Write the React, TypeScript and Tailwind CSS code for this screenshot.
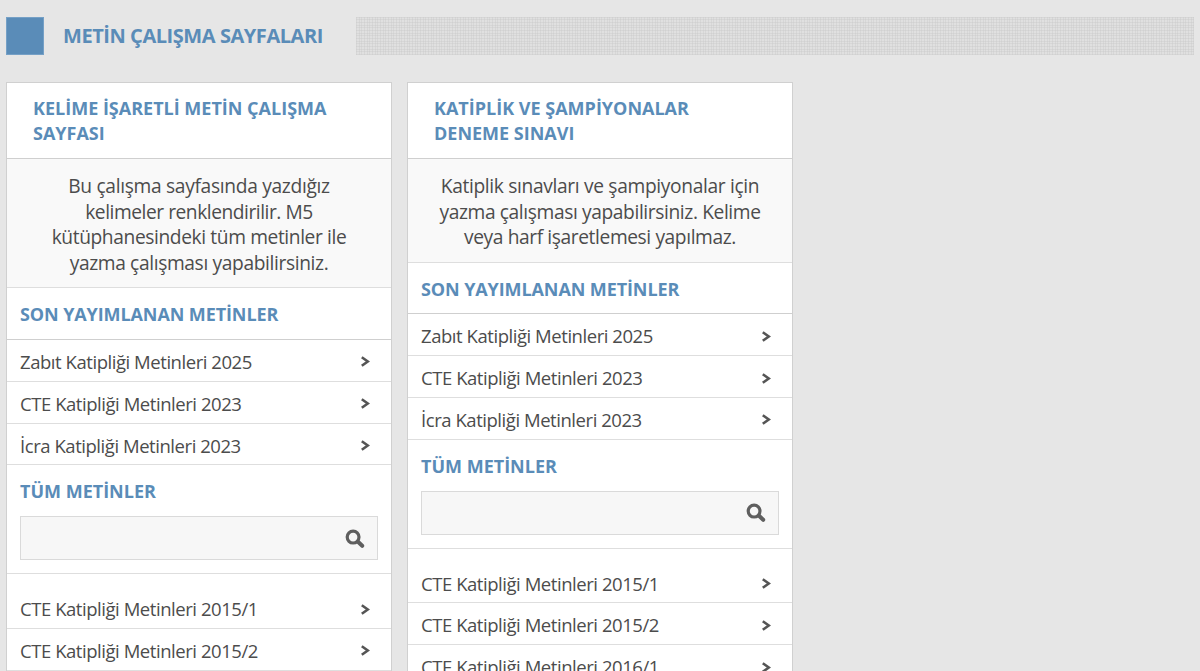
import { useState } from "react";

interface TextColumn {
  id: string;
  title: string[];
  description: { text: string; tracking: string }[];
  recent: string[];
  all: string[];
}

const recentTexts = ["Zabıt Katipliği Metinleri 2025", "CTE Katipliği Metinleri 2023", "İcra Katipliği Metinleri 2023"];

const columns: TextColumn[] = [
  {
    id: "kelime",
    title: ["KELİME İŞARETLİ METİN ÇALIŞMA", "SAYFASI"],
    description: [
      { text: "Bu çalışma sayfasında yazdığız", tracking: "tracking-[-0.32px]" },
      { text: "kelimeler renklendirilir. M5", tracking: "tracking-[-0.46px]" },
      { text: "kütüphanesindeki tüm metinler ile", tracking: "tracking-[-0.39px]" },
      { text: "yazma çalışması yapabilirsiniz.", tracking: "tracking-[-0.37px]" },
    ],
    recent: recentTexts,
    all: ["CTE Katipliği Metinleri 2015/1", "CTE Katipliği Metinleri 2015/2"],
  },
  {
    id: "katiplik",
    title: ["KATİPLİK VE ŞAMPİYONALAR", "DENEME SINAVI"],
    description: [
      { text: "Katiplik sınavları ve şampiyonalar için", tracking: "tracking-[-0.34px]" },
      { text: "yazma çalışması yapabilirsiniz. Kelime", tracking: "tracking-[-0.39px]" },
      { text: "veya harf işaretlemesi yapılmaz.", tracking: "tracking-[-0.4px]" },
    ],
    recent: recentTexts,
    all: ["CTE Katipliği Metinleri 2015/1", "CTE Katipliği Metinleri 2015/2", "CTE Katipliği Metinleri 2016/1"],
  },
];

function SearchIcon() {
  return (
    <svg viewBox="0 0 20 20" className="w-5 h-5 shrink-0 mt-px" fill="none" stroke="#5f5f5f" strokeLinecap="round">
      <circle cx="8.1" cy="8.1" r="5.9" strokeWidth="3.2" />
      <path d="M13 12.8L17.2 16.8" strokeWidth="4" />
    </svg>
  );
}

function TextRow({ label }: { label: string }) {
  return (
    <a href="#" className="flex items-center justify-between h-[41.75px] border-b border-[#dedede] pl-[13px] pr-[21px] text-[18.5px] text-[#4c4c4c]">
      <span className="whitespace-nowrap pt-[3px] tracking-[-0.45px]">{label}</span>
      <svg viewBox="0 0 9 11" className="w-[9px] h-[11px] mt-[3px]" fill="none" stroke="#555" strokeWidth="2.6">
        <path d="M0.8 1.2L6.8 5.5L0.8 9.8" />
      </svg>
    </a>
  );
}

function ColumnCard({ column }: { column: TextColumn }) {
  const [query, setQuery] = useState("");
  const visible = column.all.filter((t) => t.toLowerCase().includes(query.toLowerCase()));

  return (
    <section className="w-[386px] shrink-0 h-[700px] bg-white border border-[#d0d0d0]">
      <header className="h-[76px] pt-[13px] pl-[26px] border-b border-[#cfcfcf]">
        <h2 className="text-[18px] leading-[24.6px] font-bold text-[#5a8cb8]">
          {column.title.map((line) => (
            <span key={line} className="block whitespace-nowrap">
              {line}
            </span>
          ))}
        </h2>
      </header>
      <p className="bg-[#f9f9f9] border-b border-[#dedede] pt-[14px] pb-[12px] text-center text-[19.2px] leading-[25.6px] text-[#4c4c4c]">
        {column.description.map((line) => (
          <span key={line.text} className={`block whitespace-nowrap ${line.tracking}`}>
            {line.text}
          </span>
        ))}
      </p>
      <h3 className="h-[51.7px] flex items-center pt-[2px] pl-[13px] border-b border-[#cfcfcf] text-[18px] font-bold tracking-[-0.1px] text-[#5a8cb8]">
        SON YAYIMLANAN METİNLER
      </h3>
      {column.recent.map((label) => (
        <TextRow key={label} label={label} />
      ))}
      <div className="h-[109px] border-b border-[#dedede] pt-[13px] px-[13px]">
        <h3 className="h-[38px] leading-[27px] text-[18px] font-bold text-[#5a8cb8]">TÜM METİNLER</h3>
        <label className="flex items-center h-[44px] bg-[#f7f7f7] border border-[#dadada] pr-3">
          <input
            value={query}
            onChange={(e) => setQuery(e.target.value)}
            className="flex-1 min-w-0 px-3 bg-transparent outline-none text-[18px]"
          />
          <SearchIcon />
        </label>
      </div>
      <div className="pt-[13px]">
        {visible.map((label) => (
          <TextRow key={label} label={label} />
        ))}
      </div>
    </section>
  );
}

export default function App() {
  return (
    <div className="w-full h-[671px] overflow-hidden bg-[#e6e6e6] font-['Open_Sans','Noto_Sans',sans-serif]">
      <div className="flex items-center pl-[6px] pr-[6px] pt-[17px]">
        <div className="w-[38px] h-[38px] bg-[#5a8cb8] border border-[#75a0c6]" />
        <h1 className="w-[312px] pl-[19px] whitespace-nowrap text-[20px] font-bold tracking-[-0.44px] text-[#5a8cb8]">
          METİN ÇALIŞMA SAYFALARI
        </h1>
        <div className="flex-1 h-[38px] bg-[#e0e0e0] bg-[repeating-linear-gradient(0deg,#c4c4c455_0_1px,transparent_1px_2.667px),repeating-linear-gradient(90deg,#c4c4c455_0_1px,transparent_1px_2.667px)]" />
      </div>
      <div className="flex items-start gap-[15px] pl-[6px] pt-[27px]">
        {columns.map((column) => (
          <ColumnCard key={column.id} column={column} />
        ))}
      </div>
    </div>
  );
}
